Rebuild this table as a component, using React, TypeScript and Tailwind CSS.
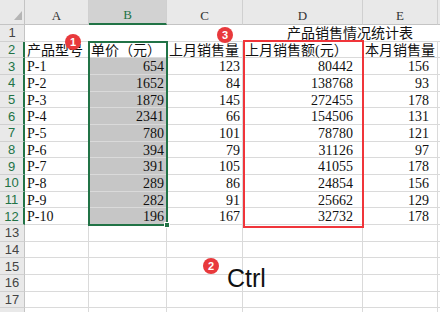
import React from "react";

const rows: [string, string, string, string, string][] = [
  ["P-1", "654", "123", "80442", "156"],
  ["P-2", "1652", "84", "138768", "93"],
  ["P-3", "1879", "145", "272455", "178"],
  ["P-4", "2341", "66", "154506", "131"],
  ["P-5", "780", "101", "78780", "121"],
  ["P-6", "394", "79", "31126", "97"],
  ["P-7", "391", "105", "41055", "178"],
  ["P-8", "289", "86", "24854", "156"],
  ["P-9", "282", "91", "25662", "129"],
  ["P-10", "196", "167", "32732", "178"],
];

const cellFont = { fontFamily: '"Liberation Serif", "Noto Sans CJK SC", serif' };

function RowHead({ n, sel }: { n: number | null; sel: boolean }) {
  return (
    <div
      className={`w-[25px] shrink-0 h-full flex items-center justify-center bg-[#e9e9e9] border-b border-b-[#d0d0d0] text-[13px] leading-none ${
        sel ? "border-r-2 border-r-[#217346] text-[#217346]" : "border-r border-r-[#c4c4c4] text-[#444]"
      }`}
      style={{ fontFamily: '"Liberation Sans", Arial, sans-serif' }}
    >
      {n}
    </div>
  );
}

function Cell({
  w,
  children,
  right,
  sel,
  pr,
}: {
  w: string;
  children?: React.ReactNode;
  right?: boolean;
  sel?: boolean;
  pr?: string;
}) {
  return (
    <div
      className={`${w} shrink-0 h-full border-r border-b border-[#dadada] overflow-visible whitespace-nowrap text-[14px] leading-[16px] pt-[1px] text-[#111] ${
        right ? `text-right ${pr ?? "pr-[2px]"}` : "pl-[2px]"
      } ${sel ? "bg-[#c6c6c6]" : ""}`}
      style={cellFont}
    >
      {children}
    </div>
  );
}

function Badge({ n, cls }: { n: number; cls: string }) {
  return (
    <div
      className={`absolute ${cls} w-[16px] h-[16px] rounded-full bg-[#e8393c] text-white text-[11px] font-bold flex items-center justify-center leading-none`}
      style={{ fontFamily: '"Liberation Sans", Arial, sans-serif' }}
    >
      {n}
    </div>
  );
}

export default function App() {
  const colHead = (label: string, w: string, sel?: boolean) => (
    <div
      className={`${w} shrink-0 h-full flex items-center justify-center text-[13px] leading-none pt-[6px] border-r border-r-[#d0d0d0] ${
        sel
          ? "bg-[#d2d2d2] text-[#217346] border-b-2 border-b-[#217346]"
          : "bg-[#e9e9e9] text-[#333] border-b border-b-[#c4c4c4]"
      }`}
      style={cellFont}
    >
      {label}
    </div>
  );

  return (
    <div className="relative w-[440px] h-[312px] overflow-hidden bg-white">
      {/* column header */}
      <div className="flex h-[25px]">
        <div className="w-[25px] shrink-0 h-full bg-[#e9e9e9] border-r border-b border-[#c4c4c4] relative">
          <svg className="absolute left-[14px] top-[11px]" width="8" height="9" viewBox="0 0 8 9">
            <polygon points="8,0 8,9 0,9" fill="#b5b5b5" />
          </svg>
        </div>
        {colHead("A", "w-[64px]")}
        {colHead("B", "w-[78px]", true)}
        {colHead("C", "w-[76px]")}
        {colHead("D", "w-[120px]")}
        {colHead("E", "w-[75px]")}
        <div className="flex-1 h-full bg-[#e9e9e9] border-b border-b-[#c4c4c4]" />
      </div>

      {/* row 1 */}
      <div className="flex h-[16.67px]">
        <RowHead n={1} sel={false} />
        <div
          className="flex-1 h-full border-b border-[#dadada] whitespace-nowrap text-[14px] leading-[16px] pt-[1px] pl-[262px] text-[#111]"
          style={cellFont}
        >
          产品销售情况统计表
        </div>
      </div>

      {/* row 2 */}
      <div className="flex h-[16.67px]">
        <RowHead n={2} sel={true} />
        <Cell w="w-[64px]">产品型号</Cell>
        <Cell w="w-[78px]">单价（元）</Cell>
        <Cell w="w-[76px]">上月销售量</Cell>
        <Cell w="w-[120px]">上月销售额(元）</Cell>
        <Cell w="w-[75px]">本月销售量</Cell>
        <div className="flex-1 h-full border-b border-[#dadada]" />
      </div>

      {rows.map((r, i) => (
        <div key={i} className="flex h-[16.67px]">
          <RowHead n={i + 3} sel={true} />
          <Cell w="w-[64px]">{r[0]}</Cell>
          <Cell w="w-[78px]" right sel>
            {r[1]}
          </Cell>
          <Cell w="w-[76px]" right>
            {r[2]}
          </Cell>
          <Cell w="w-[120px]" right pr="pr-[9px]">
            {r[3]}
          </Cell>
          <Cell w="w-[75px]" right pr="pr-[8px]">
            {r[4]}
          </Cell>
          <div className="flex-1 h-full border-b border-[#dadada]" />
        </div>
      ))}

      {[13, 14, 15, 16, 17, 18].map((n) => (
        <div key={n} className="flex h-[16.67px]">
          <RowHead n={n === 18 ? null : n} sel={false} />
          <Cell w="w-[64px]" />
          <Cell w="w-[78px]" />
          <Cell w="w-[76px]" />
          <Cell w="w-[120px]" />
          <Cell w="w-[75px]" />
          <div className="flex-1 h-full border-b border-[#dadada]" />
        </div>
      ))}

      {/* selection B2:B12 */}
      <div className="absolute left-[88px] top-[41px] w-[80px] h-[185px] border-2 border-[#217346] pointer-events-none" />
      <div className="absolute left-[164px] top-[222px] w-[6px] h-[6px] bg-[#217346] border border-white" />

      {/* red box D2:D12 */}
      <div className="absolute left-[243px] top-[40px] w-[121px] h-[188px] border-2 border-[#f0353a] pointer-events-none" />

      <Badge n={1} cls="left-[65px] top-[34px]" />
      <Badge n={3} cls="left-[217px] top-[27px]" />
      <Badge n={2} cls="left-[203px] top-[258px]" />

      <div
        className="absolute left-[227px] top-[266px] text-[25px] leading-[25px] text-[#111]"
        style={{ fontFamily: '"Liberation Sans", Arial, sans-serif' }}
      >
        Ctrl
      </div>
    </div>
  );
}
